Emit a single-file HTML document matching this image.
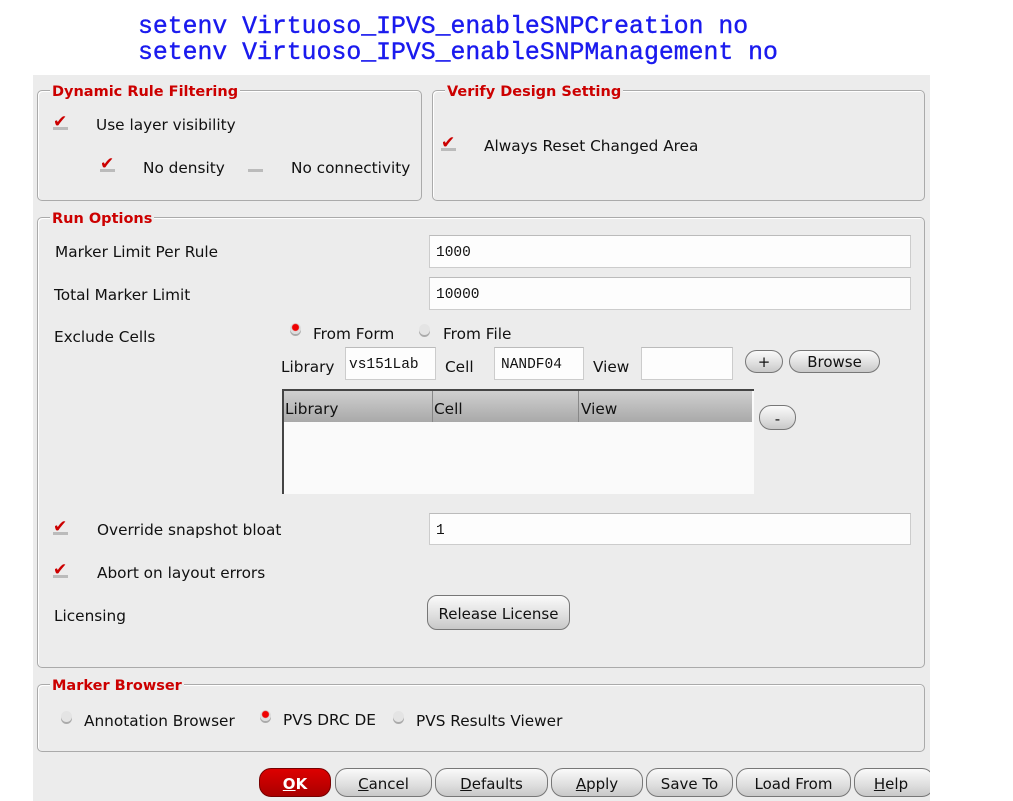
<!DOCTYPE html>
<html><head><style>
body{margin:0;width:1013px;height:801px;background:#fff;position:relative;overflow:hidden;font-family:"DejaVu Sans","Liberation Sans",sans-serif;font-size:15.3px;color:#111}
.a{position:absolute;white-space:nowrap}
.t{margin-top:3px}
.mono{font-family:"Liberation Mono",monospace;color:#1a1aee;font-size:24.8px;line-height:26px;-webkit-text-stroke:0.4px #1a1aee}
.panel{position:absolute;left:33px;top:75px;width:897px;height:726px;background:#ececec}
.box{position:absolute;border:1px solid #aaa;border-radius:5px;box-shadow:inset 1px 1px 0 #fff}
.ttl{position:absolute;top:-8px;left:12px;background:#ececec;color:#cc0000;font-weight:bold;font-size:14.5px;padding:0 2px;line-height:18px}
.inp{position:absolute;background:#fdfdfd;border:1px solid #ccc;border-top-color:#bbb;box-sizing:border-box;font-family:"Liberation Mono",monospace;font-size:14.5px;padding-left:6px}
.btn{position:absolute;box-sizing:border-box;border:1px solid #777;border-radius:12px;background:linear-gradient(#fafafa,#dedede 60%,#c8c8c8);text-align:center;font-size:15px}
.cb{position:absolute;width:14px;height:12px;color:#cc0000;font-size:17px;line-height:12px;font-weight:bold}
.cb:after{content:"";position:absolute;left:0;bottom:-2px;width:15px;height:3px;background:#bbb}
.rd{position:absolute;width:11px;height:11px;border-radius:50%;background:radial-gradient(circle at 50% 40%,#e00 0 3px,#ddd 4px);box-shadow:0 2px 0 #aaa}
.rd.off{background:#e4e4e4}
</style></head><body>
<div class="a mono" style="left:138px;top:14px">setenv Virtuoso_IPVS_enableSNPCreation no</div>
<div class="a mono" style="left:138px;top:40px">setenv Virtuoso_IPVS_enableSNPManagement no</div>
<div class="panel"></div>

<div class="box" style="left:37px;top:90px;width:383px;height:109px"><div class="ttl">Dynamic Rule Filtering</div></div>
<div class="cb" style="left:53px;top:116px">✔</div>
<div class="a t" style="left:96px;top:113px">Use layer visibility</div>
<div class="cb" style="left:100px;top:158px">✔</div>
<div class="a t" style="left:143px;top:156px">No density</div>
<div class="cb" style="left:248px;top:158px"></div>
<div class="a t" style="left:291px;top:156px">No connectivity</div>

<div class="box" style="left:432px;top:90px;width:491px;height:109px"><div class="ttl">Verify Design Setting</div></div>
<div class="cb" style="left:441px;top:137px">✔</div>
<div class="a t" style="left:484px;top:134px">Always Reset Changed Area</div>

<div class="box" style="left:37px;top:217px;width:886px;height:449px"><div class="ttl">Run Options</div></div>
<div class="a t" style="left:55px;top:240px">Marker Limit Per Rule</div>
<div class="inp" style="left:429px;top:235px;width:482px;height:33px;line-height:35px">1000</div>
<div class="a t" style="left:54px;top:283px">Total Marker Limit</div>
<div class="inp" style="left:429px;top:277px;width:482px;height:33px;line-height:35px">10000</div>
<div class="a t" style="left:54px;top:325px">Exclude Cells</div>
<div class="rd" style="left:290px;top:323px"></div>
<div class="a t" style="left:313px;top:322px">From Form</div>
<div class="rd off" style="left:419px;top:324px"></div>
<div class="a t" style="left:443px;top:322px">From File</div>
<div class="a t" style="left:281px;top:355px">Library</div>
<div class="inp" style="left:345px;top:347px;width:91px;height:33px;line-height:35px;padding-left:3px">vs151Lab</div>
<div class="a t" style="left:445px;top:355px">Cell</div>
<div class="inp" style="left:494px;top:347px;width:90px;height:33px;line-height:35px">NANDF04</div>
<div class="a t" style="left:593px;top:355px">View</div>
<div class="inp" style="left:641px;top:347px;width:92px;height:33px"></div>
<div class="btn" style="left:745px;top:350px;width:38px;height:23px;line-height:23px">+</div>
<div class="btn" style="left:789px;top:350px;width:91px;height:23px;line-height:23px">Browse</div>
<div class="a" style="left:282px;top:389px;width:472px;height:105px;background:#fafafa;border-top:2px solid #444;border-left:2px solid #444;box-sizing:border-box"></div>
<div class="a" style="left:284px;top:391px;width:468px;height:31px;background:linear-gradient(#cfcfcf,#a9a9a9)"></div>
<div class="a t" style="left:285px;top:397px">Library</div>
<div class="a" style="left:432px;top:391px;width:1px;height:31px;background:#888"></div>
<div class="a t" style="left:434px;top:397px">Cell</div>
<div class="a" style="left:578px;top:391px;width:1px;height:31px;background:#888"></div>
<div class="a t" style="left:581px;top:397px">View</div>
<div class="btn" style="left:759px;top:405px;width:37px;height:25px;line-height:27px">-</div>
<div class="cb" style="left:53px;top:521px">✔</div>
<div class="a t" style="left:97px;top:518px">Override snapshot bloat</div>
<div class="inp" style="left:429px;top:513px;width:482px;height:32px;line-height:34px">1</div>
<div class="cb" style="left:53px;top:564px">✔</div>
<div class="a t" style="left:97px;top:561px">Abort on layout errors</div>
<div class="a t" style="left:54px;top:604px">Licensing</div>
<div class="btn" style="left:427px;top:595px;width:143px;height:35px;line-height:37px;border-radius:10px">Release License</div>

<div class="box" style="left:37px;top:684px;width:886px;height:66px"><div class="ttl">Marker Browser</div></div>
<div class="rd off" style="left:61px;top:711px"></div>
<div class="a t" style="left:84px;top:709px">Annotation Browser</div>
<div class="rd" style="left:260px;top:710px"></div>
<div class="a t" style="left:283px;top:708px">PVS DRC DE</div>
<div class="rd off" style="left:393px;top:711px"></div>
<div class="a t" style="left:416px;top:709px">PVS Results Viewer</div>

<div class="btn" style="left:259px;top:768px;width:72px;height:29px;line-height:31px;background:linear-gradient(#d00,#a00);border-color:#700;color:#fff;font-weight:bold"><u>O</u>K</div>
<div class="btn" style="left:335px;top:768px;width:97px;height:29px;line-height:31px"><u>C</u>ancel</div>
<div class="btn" style="left:435px;top:768px;width:113px;height:29px;line-height:31px"><u>D</u>efaults</div>
<div class="btn" style="left:551px;top:768px;width:92px;height:29px;line-height:31px"><u>A</u>pply</div>
<div class="btn" style="left:646px;top:768px;width:87px;height:29px;line-height:31px">Save To</div>
<div class="btn" style="left:736px;top:768px;width:115px;height:29px;line-height:31px">Load From</div>
<div class="btn" style="left:854px;top:768px;width:80px;height:29px;line-height:31px;padding-right:6px"><u>H</u>elp</div>
<div class="a" style="left:930px;top:760px;width:83px;height:41px;background:#fff"></div>
</body></html>
